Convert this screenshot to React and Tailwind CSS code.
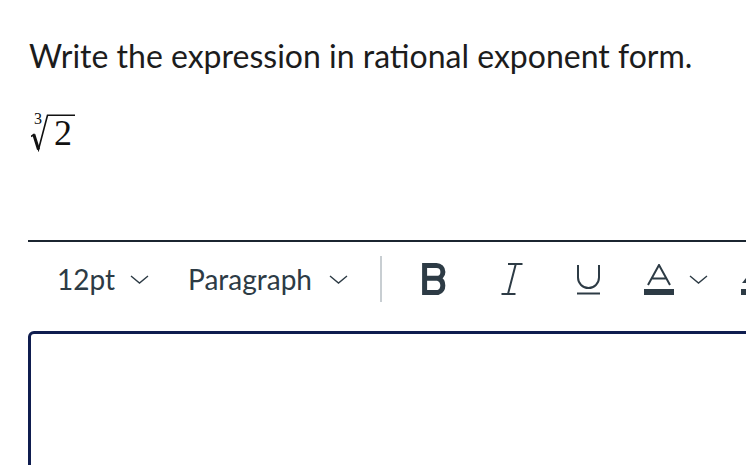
import React from "react";

function Chevron({ className }) {
  return (
    <svg className={className} width="19" height="9" viewBox="0 0 19 9" fill="none">
      <polyline points="1,1 9.5,8 18,1" stroke="#2d3b45" strokeWidth="1.4" />
    </svg>
  );
}

function Radical() {
  return (
    <div className="relative w-[46px] h-[40px]">
      <svg className="absolute inset-0" width="46" height="40" viewBox="0 0 46 40" fill="none">
        <path d="M0 24.5 L2.8 22.5 L7.5 37.5 L16.5 3.2 L44 3.2" stroke="#111" strokeWidth="1.6" />
        <path d="M2.8 22.5 L7.5 37.5" stroke="#111" strokeWidth="3" />
      </svg>
      <span className="absolute left-[3px] top-[-1px] text-[16px] leading-none text-[#111] font-['Liberation_Serif',serif]">
        3
      </span>
      <span className="absolute left-[23px] top-[3px] text-[36px] leading-none text-[#111] font-['Liberation_Serif',serif]">
        2
      </span>
    </div>
  );
}

function BoldIcon() {
  return (
    <svg width="27" height="32" viewBox="0 0 27 32" fill="none">
      <path
        d="M2.6 2.5 H14.5 a6.4 6.4 0 0 1 0 12.8 H2.6 M2.6 15.3 H16 a7.5 7.6 0 0 1 0 14.2 H2.6 M2.6 0 V32"
        stroke="#2d3b45"
        strokeWidth="5"
      />
    </svg>
  );
}

function ItalicIcon() {
  return (
    <svg width="22" height="32" viewBox="0 0 22 32" fill="none">
      <path d="M7 1 H21.5 M0.5 31 H14.5 M14.8 1 L7 31" stroke="#2d3b45" strokeWidth="2" />
    </svg>
  );
}

function UnderlineIcon() {
  return (
    <svg width="25" height="30" viewBox="0 0 25 30" fill="none">
      <path d="M2 0 V12.5 a10.5 10.5 0 0 0 21 0 V0" stroke="#2d3b45" strokeWidth="2" />
      <path d="M1 28.5 H24" stroke="#2d3b45" strokeWidth="2" />
    </svg>
  );
}

function FontColorIcon() {
  return (
    <svg width="30" height="32" viewBox="0 0 30 32" fill="none">
      <path d="M4 21 L15 1 L26 21 M7.6 14.5 H22.4" stroke="#2d3b45" strokeWidth="2" />
      <rect x="0" y="25" width="30" height="6" fill="#2d3b45" />
    </svg>
  );
}

function HighlightIcon() {
  return (
    <svg width="14" height="32" viewBox="0 0 14 32" fill="none">
      <path d="M1 19 L5 14 L9 19 Z" fill="#2d3b45" />
      <rect x="0" y="25" width="14" height="6" fill="#2d3b45" />
    </svg>
  );
}

export default function App() {
  return (
    <div className="w-[746px] h-[465px] overflow-hidden bg-white font-['Lato',sans-serif]">
      <div className="pl-[28px] pt-[40px]">
        <p className="pl-[1px] text-[32px] leading-none text-[#1c1c1c] whitespace-nowrap">
          Write the expression in rational exponent form.
        </p>

        <div className="mt-[40px] pl-[3px]">
          <Radical />
        </div>

        <div className="mt-[88px] w-[800px] border-t-2 border-[#1b2530]">
          <div className="flex h-[74px] items-center text-[28px] leading-none text-[#2d3b45]">
            <span className="ml-[29px]">12pt</span>
            <Chevron className="ml-[15px]" />
            <span className="ml-[39px]">Paragraph</span>
            <Chevron className="ml-[17px]" />
            <div className="ml-[32px] h-[46px] w-[2px] bg-[#c8ced2]" />
            <div className="ml-[40px]">
              <BoldIcon />
            </div>
            <div className="ml-[52px]">
              <ItalicIcon />
            </div>
            <div className="ml-[53px] pt-[2px]">
              <UnderlineIcon />
            </div>
            <div className="ml-[43px] pt-[2px]">
              <FontColorIcon />
            </div>
            <Chevron className="ml-[15px]" />
            <div className="ml-[33px] pt-[2px]">
              <HighlightIcon />
            </div>
          </div>

          <div className="mt-[15px] h-[200px] rounded-[6px] border-[3px] border-[#0f1d4f]" />
        </div>
      </div>
    </div>
  );
}
